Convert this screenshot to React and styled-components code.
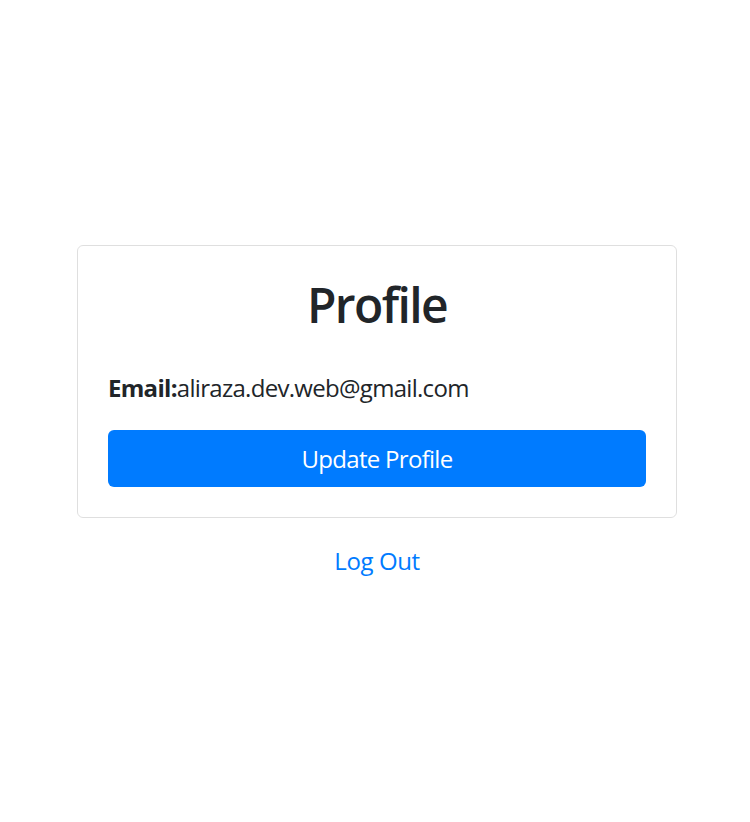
import React from 'react';
import styled, { createGlobalStyle } from 'styled-components';

const GlobalStyle = createGlobalStyle`
  body {
    margin: 0;
    font-family: "Open Sans", "Noto Sans", sans-serif;
    color: #212529;
    background: #fff;
  }
`;

const Page = styled.div`
  box-sizing: border-box;
  min-height: 822px;
  padding: 12px 0 0 4px;
  display: flex;
  flex-direction: column;
  justify-content: center;
  align-items: center;
`;

const Card = styled.div`
  box-sizing: border-box;
  width: 600px;
  border: 1px solid rgba(0, 0, 0, 0.125);
  border-radius: 6px;
  padding: 30px;
`;

const Title = styled.h2`
  margin: 0 0 36px;
  font-size: 48px;
  font-weight: 600;
  letter-spacing: -1.6px;
  line-height: 1.2;
  text-align: center;
`;

const Field = styled.div`
  font-size: 24px;
  line-height: 36px;
  letter-spacing: -0.7px;

  strong {
    font-weight: 700;
  }
`;

const Button = styled.button`
  display: block;
  width: 100%;
  height: 57px;
  margin-top: 24px;
  border: none;
  border-radius: 6px;
  background: ${(p) => (p.$link ? 'transparent' : '#007bff')};
  color: ${(p) => (p.$link ? '#007bff' : '#fff')};
  font-family: inherit;
  font-size: 24px;
  letter-spacing: ${(p) => (p.$link ? '-0.4px' : '-0.7px')};
  cursor: pointer;
`;

const Footer = styled.div`
  width: 600px;
  margin-top: 14px;
  display: flex;
  justify-content: center;
`;

const LinkButton = styled(Button)`
  width: auto;
  margin-top: 0;
  padding: 0 18px;
`;

export default function App() {
  return (
    <>
      <GlobalStyle />
      <Page>
        <Card>
          <Title>Profile</Title>
          <Field>
            <strong>Email:</strong>aliraza.dev.web@gmail.com
          </Field>
          <Button>Update Profile</Button>
        </Card>
        <Footer>
          <LinkButton $link>Log Out</LinkButton>
        </Footer>
      </Page>
    </>
  );
}
